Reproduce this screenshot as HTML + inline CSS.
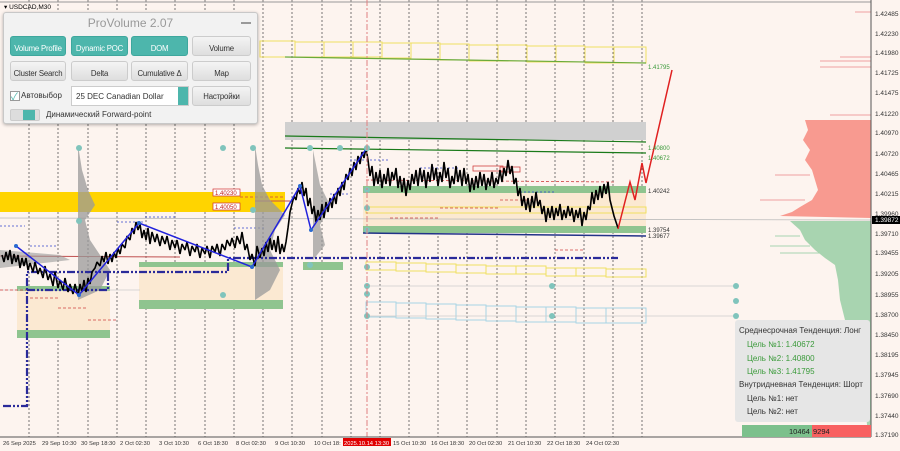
<!DOCTYPE html>
<html><head><meta charset="utf-8"><style>
body{margin:0;width:900px;height:451px;overflow:hidden;background:#fdf4ef;font-family:"Liberation Sans","Noto Sans CJK SC",sans-serif;position:relative}
svg{position:absolute;left:0;top:0}
.ax{font-size:6.5px;fill:#333}
.bx{font-size:5.8px;fill:#333}
.panel{position:absolute;left:3px;top:12px;width:253px;height:110px;background:#f2f2f2;border:1px solid #c8c8c8;border-radius:3px;box-shadow:0 1px 3px rgba(0,0,0,.3)}
.ttl{position:absolute;left:0;top:3px;width:100%;text-align:center;color:#999;font-size:12px}
.min{position:absolute;right:6px;top:9px;width:10px;height:1.5px;background:#999}
.b{position:absolute;height:20px;border-radius:3px;font-size:7.8px;text-align:center;line-height:23px;color:#333;background:linear-gradient(#f4f4f4,#dedede);border:1px solid #ccc;box-sizing:border-box;white-space:nowrap;overflow:hidden;letter-spacing:-0.2px}
.b.t{background:#4db6ac;color:#fff;border-color:#3ea79d}
.sel{position:absolute;left:67px;top:73px;width:118px;height:20px;background:#fff;border:1px solid #ccc;box-sizing:border-box;font-size:8px;line-height:19px;padding-left:4px;color:#333;white-space:nowrap}
.sel i{position:absolute;right:0;top:0;width:10px;height:18px;background:#4db6ac}
.info{position:absolute;left:735px;top:320px;width:135px;height:102px;background:#e6e6e6;border-radius:3px;font-size:8px;color:#333}
.info div{position:absolute;left:4px;white-space:nowrap}
.g{color:#3a9a3a}
</style></head><body>
<svg width="900" height="451" viewBox="0 0 900 451">
<g stroke="#555" stroke-width="0.8" stroke-dasharray="2,2">
<line x1="29" y1="0" x2="29" y2="437"/><line x1="58" y1="0" x2="58" y2="437"/><line x1="88" y1="0" x2="88" y2="437"/><line x1="117" y1="0" x2="117" y2="437"/><line x1="146" y1="0" x2="146" y2="437"/><line x1="175" y1="0" x2="175" y2="437"/><line x1="205" y1="0" x2="205" y2="437"/><line x1="234" y1="0" x2="234" y2="437"/><line x1="263" y1="0" x2="263" y2="437"/><line x1="292" y1="0" x2="292" y2="437"/><line x1="322" y1="0" x2="322" y2="437"/><line x1="351" y1="0" x2="351" y2="437"/><line x1="380" y1="0" x2="380" y2="437"/><line x1="409" y1="0" x2="409" y2="437"/><line x1="438" y1="0" x2="438" y2="437"/><line x1="467" y1="0" x2="467" y2="437"/><line x1="497" y1="0" x2="497" y2="437"/><line x1="526" y1="0" x2="526" y2="437"/><line x1="555" y1="0" x2="555" y2="437"/><line x1="584" y1="0" x2="584" y2="437"/><line x1="613" y1="0" x2="613" y2="437"/><line x1="642" y1="0" x2="642" y2="437"/>
</g>
<line x1="0" y1="2" x2="871" y2="2" stroke="#999"/>
<rect x="17" y="288" width="93" height="50" fill="#fbe9d2"/>
<rect x="139" y="262" width="144" height="46" fill="#fbe9d2"/>
<rect x="363" y="190" width="283" height="40" fill="#fbe9d2"/>
<rect x="17" y="286" width="93" height="5" fill="#8fc48f"/><rect x="17" y="330" width="93" height="8" fill="#8fc48f"/>
<rect x="139" y="262" width="144" height="5" fill="#8fc48f"/><rect x="139" y="300" width="144" height="9" fill="#8fc48f"/>
<rect x="303" y="262" width="40" height="8" fill="#8fc48f"/>
<rect x="363" y="186" width="283" height="7" fill="#8fc48f"/><rect x="363" y="226" width="283" height="7" fill="#8fc48f"/>
<rect x="285" y="122" width="361" height="18" fill="#d0d0d0"/>
<rect x="0" y="192" width="285" height="20" fill="#ffd400"/>
<line x1="285" y1="136" x2="646" y2="142" stroke="#1a7a1a" stroke-width="1.2"/>
<line x1="285" y1="148" x2="646" y2="153" stroke="#1a7a1a" stroke-width="1.2"/>
<line x1="363" y1="233" x2="646" y2="236" stroke="#223388" stroke-width="1.5"/>
<line x1="0" y1="218" x2="871" y2="220" stroke="#bbb" stroke-width="0.8"/>
<g fill="none" stroke="#f0e060" stroke-width="1">
<rect x="260" y="41" width="35" height="16"/><rect x="295" y="42" width="29" height="15"/><rect x="324" y="42" width="29" height="15"/><rect x="353" y="42" width="29" height="15"/><rect x="382" y="43" width="29" height="15"/><rect x="411" y="43" width="29" height="16"/><rect x="440" y="44" width="29" height="16"/><rect x="469" y="45" width="29" height="16"/><rect x="498" y="45" width="29" height="16"/><rect x="527" y="46" width="29" height="16"/><rect x="556" y="46" width="29" height="16"/><rect x="585" y="47" width="29" height="16"/><rect x="614" y="47" width="32" height="16"/>
<rect x="366" y="262" width="30" height="8"/><rect x="396" y="263" width="30" height="8"/><rect x="426" y="264" width="30" height="8"/><rect x="456" y="265" width="30" height="8"/><rect x="486" y="266" width="30" height="8"/><rect x="516" y="266" width="30" height="8"/><rect x="546" y="268" width="30" height="8"/><rect x="576" y="268" width="30" height="8"/><rect x="606" y="269" width="40" height="8"/>
<rect x="366" y="207" width="280" height="6"/>
</g>
<line x1="285" y1="57" x2="646" y2="63" stroke="#6aaa3a" stroke-width="1.2"/>
<g fill="none" stroke="#a8d4e4" stroke-width="1">
<rect x="366" y="302" width="30" height="15"/><rect x="396" y="303" width="30" height="15"/><rect x="426" y="304" width="30" height="15"/><rect x="456" y="305" width="30" height="15"/><rect x="486" y="306" width="30" height="15"/><rect x="516" y="307" width="30" height="15"/><rect x="546" y="307" width="30" height="15"/><rect x="576" y="308" width="30" height="15"/><rect x="606" y="308" width="40" height="15"/>
</g>
<g stroke="#ccc" stroke-width="0.8"><line x1="366" y1="286" x2="736" y2="286"/><line x1="366" y1="316" x2="736" y2="316"/><line x1="0" y1="290" x2="140" y2="290"/></g>
<g stroke="#d04040" stroke-width="0.8" stroke-dasharray="3,2" fill="none">
<line x1="0" y1="290" x2="30" y2="290"/><line x1="30" y1="298" x2="58" y2="298"/><line x1="58" y1="308" x2="88" y2="308"/><line x1="88" y1="320" x2="117" y2="320"/>
<line x1="240" y1="197" x2="285" y2="197"/><line x1="366" y1="180" x2="615" y2="182"/><line x1="390" y1="218" x2="440" y2="218"/><line x1="440" y1="208" x2="500" y2="208"/><line x1="500" y1="200" x2="540" y2="200"/><line x1="555" y1="250" x2="585" y2="250"/>
</g>
<rect x="473" y="166" width="30" height="5" fill="none" stroke="#d04040" stroke-width="0.8"/>
<rect x="500" y="167" width="20" height="5" fill="none" stroke="#d04040" stroke-width="0.8"/>
<line x1="0" y1="256" x2="180" y2="257" stroke="#c05050" stroke-width="1"/>
<line x1="255" y1="201" x2="290" y2="201" stroke="#c05050" stroke-width="1"/>
<g stroke="#3344cc" stroke-width="0.8" stroke-dasharray="2,2"><line x1="0" y1="226" x2="25" y2="226"/><line x1="30" y1="246" x2="58" y2="246"/><line x1="117" y1="222" x2="145" y2="222"/><line x1="145" y1="217" x2="175" y2="217"/><line x1="234" y1="228" x2="265" y2="228"/><line x1="330" y1="194" x2="350" y2="194"/><line x1="350" y1="160" x2="390" y2="160"/><line x1="420" y1="168" x2="460" y2="168"/><line x1="520" y1="192" x2="555" y2="192"/></g>
<path d="M78,145 L78,300 L100,290 L110,270 L100,255 L90,240 L85,220 L95,205 L88,190 L82,170 Z" fill="#999" opacity="0.75"/>
<path d="M255,145 L255,300 L270,290 L280,270 L270,250 L275,230 L285,215 L270,200 L262,185 L258,165 Z" fill="#999" opacity="0.75"/>
<path d="M313,150 L313,260 L325,245 L320,225 L330,205 L320,185 L316,165 Z" fill="#999" opacity="0.7"/>
<path d="M0,250 L60,255 L70,260 L0,268 Z" fill="#999" opacity="0.6"/>
<g stroke="#2a2a9a" stroke-width="2.2" fill="none" stroke-dasharray="8,2,2,2,2,2">
<polyline points="3,406 27,406 27,272 228,272 228,258 618,258"/>
<polyline points="27,290 108,290 108,272"/>
</g>
<polyline fill="none" stroke="#000" stroke-width="1.6" stroke-linejoin="bevel" points="2,255 4,262 6,252 8,260 10,250 12,264 14,254 16,262 18,255 20,268 22,258 24,266 26,258 28,270 30,263 33,272 35,262 38,274 40,268 43,278 45,266 48,280 50,274 53,286 55,272 58,288 60,280 63,290 65,278 68,292 70,284 73,294 75,284 78,296 80,284 82,292 84,280 86,292 88,278 90,284 92,272 95,268 97,262 100,266 102,256 104,262 106,252 108,264 110,254 112,262 114,252 116,258 118,248 120,254 122,244 125,248 127,236 130,240 132,228 134,234 136,222 138,230 140,224 142,238 144,230 146,240 148,228 150,244 152,232 155,242 157,234 160,246 162,236 165,244 167,236 170,250 172,240 175,248 177,240 180,254 182,244 185,250 187,242 190,256 192,246 195,252 197,244 200,258 202,248 205,254 207,246 210,258 212,246 215,252 217,244 220,256 222,244 225,250 227,240 230,246 232,238 235,248 237,236 240,244 242,232 245,250 247,244 250,260 252,254 255,266 257,246 260,258 262,248 264,256 266,242 268,252 270,238 272,250 274,240 276,252 278,236 280,254 282,244 284,252 286,242 288,228 290,212 292,204 294,196 296,200 298,188 300,194 302,182 304,196 306,188 308,206 310,198 312,214 314,206 316,222 318,210 320,220 322,204 324,218 326,202 328,212 330,198 332,208 334,194 336,204 338,188 340,196 342,182 344,190 346,174 348,180 350,168 352,176 354,162 356,170 358,156 360,164 362,152 364,158 366,148 368,160 370,176 372,166 374,186 376,172 378,184 380,170 382,188 384,174 386,184 388,168 390,186 392,172 394,180 396,168 398,188 400,176 402,192 404,178 406,196 408,180 410,190 412,174 414,184 416,170 418,186 420,168 422,182 424,170 426,188 428,172 430,182 432,164 434,180 436,168 438,186 440,172 442,182 444,162 446,178 448,168 450,188 452,176 454,184 456,166 458,182 460,170 462,186 464,168 466,184 468,174 470,192 472,178 474,190 476,176 478,188 480,172 482,186 484,174 486,190 488,178 490,186 492,172 494,188 496,178 498,184 500,170 502,182 504,168 506,176 508,160 510,174 512,166 514,184 516,178 518,196 520,188 522,206 524,196 526,210 528,198 530,212 532,196 534,208 536,192 538,206 540,200 542,214 544,206 546,222 548,208 550,218 552,206 554,220 556,208 558,216 560,204 562,220 564,210 566,218 568,206 570,216 572,208 574,222 576,210 578,218 580,208 582,226 584,212 586,220 588,206 590,210 592,192 594,204 596,190 598,200 600,186 602,198 604,184 606,194 608,182 610,200 612,208 614,216 616,222 618,228"/>
<polyline fill="none" stroke="#e02020" stroke-width="1.5" points="618,229 630,182 635,200 642,163 646,183 672,70"/>
<polyline fill="none" stroke="#2222dd" stroke-width="1.5" points="16,246 79,295 139,223 252,267 300,186 311,230 366,149"/>
<g fill="#2a6ad0"><circle cx="16" cy="246" r="2"/><circle cx="79" cy="295" r="2"/><circle cx="139" cy="223" r="2"/><circle cx="252" cy="267" r="2"/><circle cx="300" cy="186" r="2"/><circle cx="311" cy="230" r="2"/><circle cx="366" cy="149" r="2"/></g>
<g fill="#80c4bc"><circle cx="79" cy="148" r="3"/><circle cx="223" cy="148" r="3"/><circle cx="253" cy="148" r="3"/><circle cx="253" cy="210" r="3"/><circle cx="79" cy="221" r="3"/><circle cx="223" cy="295" r="3"/><circle cx="310" cy="148" r="3"/><circle cx="340" cy="148" r="3"/><circle cx="367" cy="148" r="3"/><circle cx="367" cy="190" r="3"/><circle cx="367" cy="208" r="3"/><circle cx="367" cy="230" r="3"/><circle cx="310" cy="265" r="3"/><circle cx="367" cy="267" r="3"/><circle cx="367" cy="286" r="3"/><circle cx="367" cy="294" r="3"/><circle cx="367" cy="316" r="3"/><circle cx="552" cy="286" r="3"/><circle cx="552" cy="316" r="3"/><circle cx="736" cy="286" r="3"/><circle cx="736" cy="301" r="3"/><circle cx="736" cy="316" r="3"/></g>
<line x1="367" y1="0" x2="367" y2="437" stroke="#e08080" stroke-width="1" stroke-dasharray="6,2,2,2"/>
<rect x="213" y="189" width="27" height="7" fill="#fff" stroke="#d03030" stroke-width="0.7"/><text x="215" y="195" font-size="6" fill="#c02020">1.40230</text>
<rect x="213" y="203" width="27" height="7" fill="#fff" stroke="#d03030" stroke-width="0.7"/><text x="215" y="209" font-size="6" fill="#c02020">1.40050</text>
<text x="648" y="69" font-size="6" fill="#3a9a3a">1.41795</text>
<text x="648" y="150" font-size="6" fill="#3a9a3a">1.40800</text>
<text x="648" y="160" font-size="6" fill="#3a9a3a">1.40672</text>
<text x="648" y="193" font-size="6" fill="#333">1.40242</text>
<text x="648" y="232" font-size="6" fill="#333">1.39754</text>
<text x="648" y="238" font-size="6" fill="#333">1.39677</text>
<polygon points="871,120 805,120 808,130 803,140 810,150 805,160 812,170 815,180 818,190 812,200 800,207 792,212 780,216 871,218" fill="#f89a90"/>
<polygon points="871,221 790,221 800,230 805,240 815,250 825,258 835,265 838,280 840,300 845,320 850,340 855,360 860,380 865,400 868,437 871,437" fill="#a8d4b0"/>
<g stroke="#f0a0a0" stroke-width="1"><line x1="820" y1="61" x2="871" y2="61"/><line x1="820" y1="67" x2="871" y2="67"/><line x1="840" y1="57" x2="871" y2="57"/><line x1="830" y1="115" x2="871" y2="115"/><line x1="775" y1="175" x2="810" y2="175"/><line x1="760" y1="200" x2="805" y2="200"/><line x1="855" y1="12" x2="871" y2="12"/></g>
<g stroke="#a8d4b0" stroke-width="1"><line x1="780" y1="253" x2="840" y2="253"/><line x1="775" y1="236" x2="800" y2="236"/><line x1="770" y1="246" x2="810" y2="246"/></g>
<line x1="871" y1="0" x2="871" y2="437" stroke="#555"/>
<line x1="0" y1="437" x2="871" y2="437" stroke="#555"/>
<g class="ax">
<text x="875" y="16">1.42485</text><text x="875" y="36">1.42230</text><text x="875" y="55">1.41980</text><text x="875" y="75">1.41725</text><text x="875" y="95">1.41475</text><text x="875" y="116">1.41220</text><text x="875" y="135">1.40970</text><text x="875" y="156">1.40720</text><text x="875" y="176">1.40465</text><text x="875" y="196">1.40215</text><text x="875" y="216">1.39960</text><text x="875" y="236">1.39710</text><text x="875" y="255">1.39455</text><text x="875" y="276">1.39205</text><text x="875" y="297">1.38955</text><text x="875" y="317">1.38700</text><text x="875" y="337">1.38450</text><text x="875" y="357">1.38195</text><text x="875" y="377">1.37945</text><text x="875" y="398">1.37690</text><text x="875" y="418">1.37440</text><text x="875" y="437">1.37190</text>
</g>
<rect x="872" y="216" width="28" height="8" fill="#000"/><text x="875" y="222" font-size="6.5" fill="#fff">1.39872</text>
<g class="bx">
<text x="3" y="445">26 Sep 2025</text><text x="42" y="445">29 Sep 10:30</text><text x="81" y="445">30 Sep 18:30</text><text x="120" y="445">2 Oct 02:30</text><text x="159" y="445">3 Oct 10:30</text><text x="198" y="445">6 Oct 18:30</text><text x="236" y="445">8 Oct 02:30</text><text x="275" y="445">9 Oct 10:30</text><text x="314" y="445">10 Oct 18:</text><text x="393" y="445">15 Oct 10:30</text><text x="431" y="445">16 Oct 18:30</text><text x="469" y="445">20 Oct 02:30</text><text x="508" y="445">21 Oct 10:30</text><text x="547" y="445">22 Oct 18:30</text><text x="586" y="445">24 Oct 02:30</text>
</g>
<rect x="343" y="438" width="48" height="8" fill="#e00000"/><text x="344" y="445" font-size="5.8" fill="#fff">2025.10.14 13:30</text>
<text x="4" y="9" font-size="6.5" fill="#000">▾ USDCAD,M30</text>
<rect x="742" y="425" width="70" height="12" fill="#7cc08c"/><rect x="812" y="425" width="59" height="12" fill="#f86060"/>
<text x="789" y="434" font-size="7.5" fill="#222">10464</text><text x="813" y="434" font-size="7.5" fill="#222">9294</text>
</svg>
<div class="panel">
<div class="ttl">ProVolume 2.07</div><div class="min"></div>
<div class="b t" style="left:6px;top:23px;width:56px">Volume Profile</div>
<div class="b t" style="left:67px;top:23px;width:57px">Dynamic POC</div>
<div class="b t" style="left:127px;top:23px;width:57px">DOM</div>
<div class="b" style="left:188px;top:23px;width:59px">Volume</div>
<div class="b" style="left:6px;top:48px;width:56px">Cluster Search</div>
<div class="b" style="left:67px;top:48px;width:57px">Delta</div>
<div class="b" style="left:127px;top:48px;width:57px">Cumulative Δ</div>
<div class="b" style="left:188px;top:48px;width:59px">Map</div>
<div style="position:absolute;left:6px;top:78px;width:8px;height:8px;border:1px solid #999;background:#fff"></div>
<div style="position:absolute;left:7px;top:75px;font-size:10px;color:#4db6ac">✓</div>
<div style="position:absolute;left:17px;top:78px;font-size:8px;color:#333;white-space:nowrap">Автовыбор</div>
<div class="sel">25 DEC Canadian Dollar<i></i></div>
<div class="b" style="left:188px;top:73px;width:59px;line-height:20px">Настройки</div>
<div style="position:absolute;left:6px;top:96px;width:28px;height:10px;border-radius:2px;background:#ddd;border:1px solid #ccc"><div style="position:absolute;left:12px;top:0;width:12px;height:10px;background:#4db6ac"></div></div>
<div style="position:absolute;left:42px;top:97px;font-size:8px;color:#333;white-space:nowrap">Динамический Forward-point</div>
</div>
<div class="info">
<div style="top:6px">Среднесрочная Тенденция: Лонг</div>
<div class="g" style="top:20px;left:12px">Цель №1: 1.40672</div>
<div class="g" style="top:34px;left:12px">Цель №2: 1.40800</div>
<div class="g" style="top:47px;left:12px">Цель №3: 1.41795</div>
<div style="top:60px">Внутридневная Тенденция: Шорт</div>
<div style="top:74px;left:12px">Цель №1: нет</div>
<div style="top:87px;left:12px">Цель №2: нет</div>
</div>
</body></html>
